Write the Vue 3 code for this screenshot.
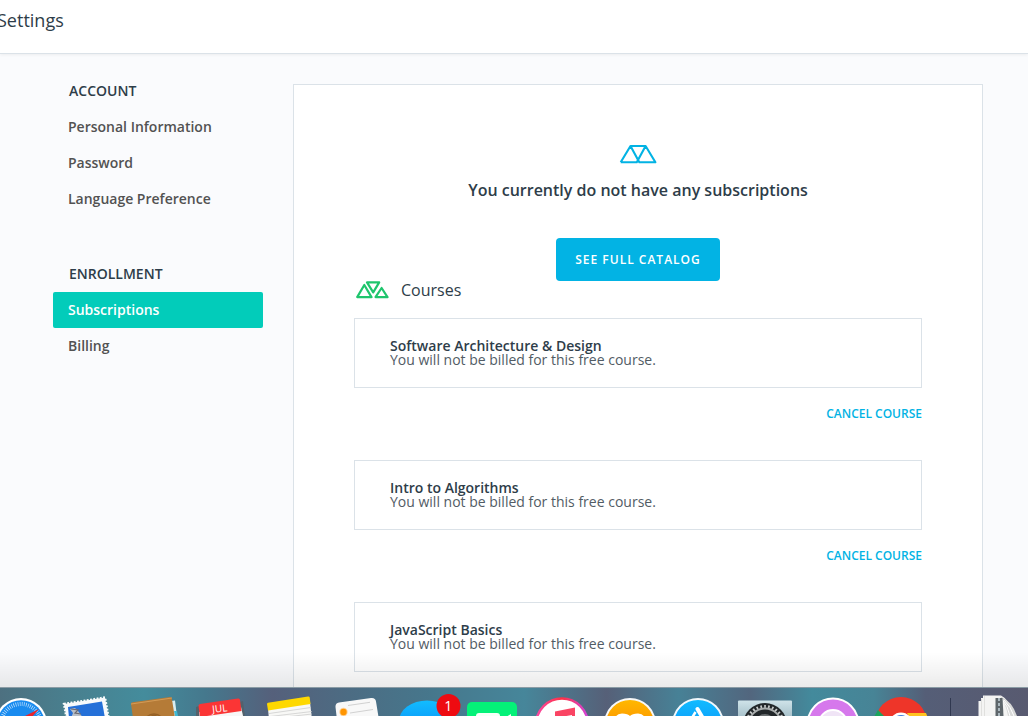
<script setup>
const groups = [
  { title: 'ACCOUNT', items: ['Personal Information', 'Password', 'Language Preference'] },
  { title: 'ENROLLMENT', items: ['Subscriptions', 'Billing'] },
]
const active = 'Subscriptions'
const courses = ['Software Architecture & Design', 'Intro to Algorithms', 'JavaScript Basics']
</script>

<template>
  <div class="screen">
    <header class="topbar"><h1>Settings</h1></header>
    <div class="body">
      <nav class="sidebar">
        <section v-for="g in groups" :key="g.title" class="group">
          <h2>{{ g.title }}</h2>
          <a v-for="i in g.items" :key="i" class="item" :class="{ active: i === active }">{{ i }}</a>
        </section>
      </nav>
      <main class="card">
        <svg class="logo" width="38" height="20" viewBox="0 0 38 20" fill="none" stroke="#02b3e4" stroke-width="2.100" stroke-linejoin="round">
          <path d="M1.7 18.3 11.5 2H26.6L36.4 18.3H20.3L11.5 2M1.7 18.3H17.8L26.6 2" />
        </svg>
        <p class="empty">You currently do not have any subscriptions</p>
        <button class="catalog">SEE FULL CATALOG</button>
        <div class="heading">
          <svg width="35" height="20" viewBox="-1 0 35 20" fill="none" stroke="#1fc56d" stroke-width="2.200" stroke-linejoin="round">
            <path d="M2.200 17.1 9.300 5 16.500 17.1ZM12 2.400H24.2L18.200 12.4ZM20.5 17.1 26.600 8 32.500 17.1Z" />
          </svg>
          <h3>Courses</h3>
        </div>
        <article v-for="c in courses" :key="c" class="course">
          <div class="box">
            <h4>{{ c }}</h4>
            <p>You will not be billed for this free course.</p>
          </div>
          <a class="cancel">CANCEL COURSE</a>
        </article>
      </main>
    </div>
    <div class="shade"></div>
    <svg class="dock" width="1028" height="29" viewBox="0 687 1028 29">
      <defs>
        <linearGradient id="wall">
          <stop offset="0" stop-color="#4d7080" /><stop offset=".06" stop-color="#497e8d" />
          <stop offset=".14" stop-color="#448c9c" /><stop offset=".2" stop-color="#45788d" />
          <stop offset=".265" stop-color="#55607b" /><stop offset=".34" stop-color="#4c6c83" />
          <stop offset=".42" stop-color="#46778c" /><stop offset=".51" stop-color="#46869a" />
          <stop offset=".59" stop-color="#566078" /><stop offset=".66" stop-color="#478196" />
          <stop offset=".73" stop-color="#52667e" /><stop offset=".79" stop-color="#438a9c" />
          <stop offset=".85" stop-color="#478496" /><stop offset=".9" stop-color="#555e77" />
          <stop offset="1" stop-color="#585a70" />
        </linearGradient>
        <linearGradient id="blue" x2="0" y2="1"><stop stop-color="#12bcff" /><stop offset="1" stop-color="#0783f5" /></linearGradient>
        <linearGradient id="gold" x2="0" y2="1"><stop stop-color="#ffb900" /><stop offset="1" stop-color="#fb7600" /></linearGradient>
        <linearGradient id="steel" x2="0" y2="1"><stop stop-color="#cfe3e9" /><stop offset="1" stop-color="#87a5b1" /></linearGradient>
        <linearGradient id="pink"><stop stop-color="#f849a4" /><stop offset=".5" stop-color="#ff3043" /><stop offset="1" stop-color="#d345dd" /></linearGradient>
      </defs>
      <rect y="687" width="1028" height="29" fill="url(#wall)" />
      <rect y="687" width="1028" height="1" fill="#8b9ca5" />
      <!-- compass -->
      <circle cx="21" cy="724" r="26" fill="#fff" />
      <circle cx="21" cy="724" r="23.8" fill="#198bef" />
      <circle cx="21" cy="724" r="20" fill="none" stroke="#c4e4ff" stroke-width="4" stroke-dasharray=".7 1.4" />
      <path d="M39 709 17 720 23 727Z" fill="#e8232b" />
      <!-- stamp -->
      <path d="M64 704 105 697.5 109 720H67Z" fill="#f8fafb" stroke="#f8fafb" stroke-width="2.4" stroke-dasharray="1.9 1.4" />
      <path d="M68 707 102 701.5 105 718H69Z" fill="#2570d8" />
      <path d="m70 709 5-1 3 3 3 4 2 3H71l2-5Z" fill="#b8bfc8" />
      <path d="m71 709 7 1-3 3 6 1" fill="none" stroke="#6b6970" stroke-width="1.2" />
      <!-- address book -->
      <path d="m171 701 4-.5 2 16h-5Z" fill="#d9edf0" /><path d="m174 711 3 0 1 5h-3Z" fill="#42b8d3" />
      <path d="M131 704q0-1.500 1.500-1.800L170 697q1.500-.2 1.800 1.500L175 718H133Z" fill="#b57b37" />
      <path d="m131 704 41-6" stroke="#d49b56" stroke-width="1" />
      <circle cx="154" cy="724" r="10" stroke="#956126" fill="none" stroke-width="1.500" />
      <circle cx="154" cy="718.500" r="4" fill="#956126" />
      <!-- calendar -->
      <path d="m240 702 3-1 2 16h-4ZM196 707l3-1 1 10h-4Z" fill="#53616b" />
      <path d="M199 712 241 707 244 720H200Z" fill="#f7f7f7" />
      <path d="M198.500 706q0-1.700 1.500-2L238 698.500q1.800-.3 2 1.500L241.500 711 200 717Z" fill="#fb3535" />
      <text x="212" y="712" transform="rotate(-6 220 708)" fill="#fff" font-size="10" font-family="Open Sans, sans-serif">JUL</text>
      <!-- notepad -->
      <path d="M268 708 310 702 312 720H269Z" fill="#f8f8f6" />
      <path d="M267 704q0-1 1-1.200L308 696.500q1.500-.3 1.700 1L310.500 704 268 710.500Z" fill="#fed800" />
      <path d="m269 713.500 42-6M270 716.500l42-5M285 717l27-3" stroke="#c8c8c8" stroke-width=".7" />
      <!-- reminders -->
      <path d="M335.500 707q-.2-4 3.500-4.500L371 698q4.500-.5 5 3.500L379 720H337Z" fill="#f8f8f8" />
      <circle cx="343.500" cy="712" r="4.200" fill="#ffd095" /><circle cx="343.500" cy="712" r="3.200" fill="#ff9500" />
      <path d="m348 705.500 22-3.200M350 713l23-3.500" stroke="#c7c7c7" stroke-width=".8" />
      <!-- messages -->
      <ellipse cx="427" cy="721" rx="28" ry="20.500" fill="url(#blue)" />
      <circle cx="448.500" cy="706" r="12" fill="#ee0b11" />
      <text x="448.300" y="711" fill="#fff" font-size="14" text-anchor="middle" font-family="Open Sans, sans-serif">1</text>
      <!-- video calls -->
      <rect x="467" y="702" width="50" height="30" rx="5" fill="#04f178" />
      <rect x="476" y="713" width="24" height="12" rx="3" fill="#f6fff8" /><path d="m506 717 5-3v6Z" fill="#f6fff8" />
      <!-- music -->
      <circle cx="562" cy="724.500" r="26" fill="#fff" stroke="url(#pink)" stroke-width="2.500" />
      <path d="M555 711.500 575 707.500V722h-3v-7l-14 2.500V722h-3Z" fill="#fa4463" />
      <!-- books -->
      <circle cx="630" cy="724" r="25" fill="url(#gold)" stroke="#f7f8f8" stroke-width="2" />
      <path d="M615 720q0-6 7-6.500 6 0 8 2.500 2-2.500 8-2.500 7 .5 7 6.500Z" fill="#fff" />
      <!-- store -->
      <circle cx="698" cy="724" r="25" fill="url(#blue)" stroke="#f2f8fc" stroke-width="2" />
      <path d="m697.500 709 7 12" stroke="#fff" stroke-width="4" stroke-linecap="round" />
      <path d="m695.500 712-6 10" stroke="#fff" stroke-width="2.500" />
      <!-- preferences -->
      <rect x="738" y="700.500" width="54" height="30" rx="1" fill="url(#steel)" />
      <circle cx="765" cy="725" r="22" fill="#22272a" />
      <circle cx="765" cy="725" r="18.5" fill="none" stroke="#c6c9c9" stroke-width="3" stroke-dasharray="1.700 2.200" />
      <circle cx="765" cy="725" r="16.500" fill="none" stroke="#a9adad" stroke-width="2" />
      <circle cx="765" cy="724" r="9" fill="none" stroke="#6b7072" stroke-width="2" />
      <!-- podcasts -->
      <circle cx="833" cy="724" r="25.500" fill="#d678ec" stroke="#fff" stroke-width="2" />
      <circle cx="833" cy="724" r="14" fill="#f0e4f6" stroke="#fff" stroke-width="2" />
      <!-- browser -->
      <circle cx="901" cy="723" r="26" fill="#ee3529" />
      <path d="m878 710 7 7h-11Z" fill="#1ba45c" /><path d="M907 713h19l2 5h-18Z" fill="#ffc31f" />
      <circle cx="901" cy="724" r="11.500" fill="#fff" /><circle cx="901" cy="724" r="9" fill="#427ddd" />
      <path d="M950.500 698v18" stroke="#303850" />
      <!-- document stack -->
      <path d="M978.500 701h2.500v-3h2v-2.500h18q7 3 15 21h-37.500Z" fill="#f4f4f3" />
      <path d="M1000 696q12 5 17 20h-9q-2-12-8-20Z" fill="#d8d9d8" />
      <path d="M1002 699q6 7 8 17M1004 700q7 7 10 16" stroke="#fff" fill="none" />
      <path d="M995.500 698h7l1 18h-8Z" fill="#5e666b" /><path d="M999 698v18" stroke="#aab7be" stroke-width="2" stroke-dasharray="3 2" />
      <path d="M981.500 699v17M984.500 696v20" stroke="#d2d2d0" stroke-width=".6" />
    </svg>
  </div>
</template>

<style>
body { overflow: hidden; }
</style>
<style scoped>
.screen { position: relative; width: 1028px; height: 716px; overflow: hidden; background: #fafbfd; font-family: "Open Sans", "Noto Sans", sans-serif; color: #2e3d49; }
h1, h2, h3, h4, p { margin: 0; }
.topbar { height: 53px; background: #fff; border-bottom: 1px solid #dbe2e8; box-shadow: 0 1px 3px rgba(0, 0, 0, .06); }
h1 { margin-left: -3px; padding-top: 8px; font-size: 18px; line-height: 25px; font-weight: 400; }
.body { display: flex; align-items: flex-start; }
.sidebar { width: 210px; margin: 19px 30px 0 53px; }
.group { height: 183px; }
h2 { height: 36px; padding-left: 16px; font-size: 14px; line-height: 36px; font-weight: 600; }
.item { display: block; height: 36px; padding-left: 15px; border-radius: 2px; font-size: 14px; line-height: 36px; font-weight: 600; color: #525252; }
.item.active { background: #02ccba; color: #fff; }
.card { box-sizing: border-box; display: flex; flex-direction: column; width: 690px; height: 680px; margin-top: 30px; padding: 59px 60px 0; background: #fff; border: 1px solid #dbe2e8; }
.logo { align-self: center; }
.empty { margin-top: 14px; text-align: center; font-size: 16px; line-height: 24px; font-weight: 600; }
.catalog { align-self: center; width: 164px; height: 43px; margin-top: 36px; padding: 0; border: 0; border-radius: 4px; background: #02b3e4; color: #fff; font: 600 12px/43px "Open Sans", sans-serif; letter-spacing: 1px; }
.heading { display: flex; align-items: center; gap: 12px; height: 20px; margin: -1px 0 18px; }
h3 { font-size: 16px; line-height: 20px; font-weight: 400; }
.course { display: flex; flex-direction: column; height: 142px; flex: none; }
.box { box-sizing: border-box; height: 70px; padding: 20px 35px; border: 1px solid #dbe2e8; }
h4 { font-size: 14px; line-height: 14px; font-weight: 600; }
.box p { font-size: 14px; line-height: 14px; color: #525c65; }
.cancel { align-self: flex-end; margin-top: 16px; font-size: 12px; line-height: 20px; font-weight: 600; color: #02b3e4; }
.shade { position: absolute; left: 0; right: 0; top: 652px; height: 35px; background: linear-gradient(transparent, rgba(0, 0, 0, .08)); }
.dock { position: absolute; left: 0; top: 687px; }
</style>
